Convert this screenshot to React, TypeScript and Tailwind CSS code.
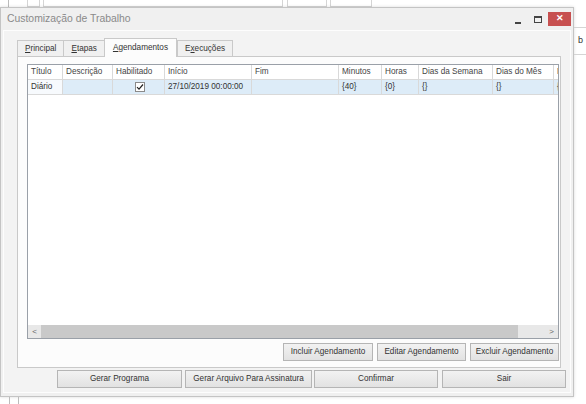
import React from "react";

// colunas da grade de agendamentos (larguras medidas no print)
const columns = [
  { title: "Título", w: 35 },
  { title: "Descrição", w: 50 },
  { title: "Habilitado", w: 52 },
  { title: "Início", w: 87 },
  { title: "Fim", w: 87 },
  { title: "Minutos", w: 43 },
  { title: "Horas", w: 37 },
  { title: "Dias da Semana", w: 74 },
  { title: "Dias do Mês", w: 61 },
  { title: "M", w: 20 },
];

const row = ["Diário", "", "check", "27/10/2019 00:00:00", "", "{40}", "{0}", "{}", "{}", "{"];

function Tab({ label, mn, active }: { label: string; mn: number; active?: boolean }) {
  const txt = (
    <>
      {label.slice(0, mn)}
      <span className="underline">{label[mn]}</span>
      {label.slice(mn + 1)}
    </>
  );
  if (active) {
    return (
      <div className="h-[19px] px-[8px] pt-[3px] bg-[#fcfcfc] border border-[#c9c9c9] border-b-0 -mb-px relative z-10">
        {txt}
      </div>
    );
  }
  return (
    <div className="h-[16px] px-[7px] pt-[2px] bg-[#f0f0f0] border border-[#c9c9c9] border-b-0 -mr-px">
      {txt}
    </div>
  );
}

function Btn({ label, w }: { label: string; w: number }) {
  return (
    <div
      className="h-[18px] flex items-center justify-center border border-[#b5b5b5] bg-gradient-to-b from-[#f2f2f2] to-[#e2e2e2] text-[#333]"
      style={{ width: w }}
    >
      {label}
    </div>
  );
}

export default function App() {
  return (
    <div
      className="w-[586px] h-[404px] overflow-hidden bg-white text-[8.2px] text-[#333]"
      style={{ fontFamily: '"Liberation Sans", Arial, sans-serif' }}
    >
      {/* pedaço da tela de trás */}
      <div className="h-[7px] flex">
        <div className="w-[9px] border-r border-[#bcbcbc]" />
        <div className="ml-[18px] w-[13px] border border-t-0 border-[#d5d5d5]" />
        <div className="ml-[3px] w-[240px] border border-t-0 border-[#d5d5d5]" />
        <div className="ml-[4px] w-[40px] border border-t-0 border-[#d5d5d5]" />
        <div className="ml-[3px] w-[42px] border border-t-0 border-[#d5d5d5]" />
      </div>

      <div className="flex">
        {/* janela */}
        <div className="w-[574px] h-[390px] bg-[#f0f0f0] border border-[#c4c4c4] flex flex-col shadow-[0_0_3px_rgba(0,0,0,0.15)]">
          <div className="h-[22px] flex items-center pl-[6px] pr-[2px]">
            <div className="text-[10.4px] text-[#8a8a8a] flex-1">Customização de Trabalho</div>
            <div className="w-[20px] flex justify-center items-end h-[10px]">
              <div className="w-[6px] h-[2px] bg-[#444]" />
            </div>
            <div className="w-[20px] flex justify-center">
              <div className="w-[8px] h-[7px] border border-[#444] border-t-2" />
            </div>
            <div className="w-[23px] h-[14px] bg-[#c75050] flex items-center justify-center text-white text-[9px] font-bold">
              ✕
            </div>
          </div>

          <div className="flex-1 mx-[2px] mb-[3px] bg-[#f3f3f3] border border-[#fdfdfd] flex flex-col">
            {/* abas */}
            <div className="h-[25px] flex items-end pl-[13px]">
              <Tab label="Principal" mn={0} />
              <Tab label="Etapas" mn={0} />
              <Tab label="Agendamentos" mn={0} active />
              <Tab label="Execuções" mn={1} />
            </div>

            <div className="ml-[13px] w-[544px] h-[312px] border border-[#c9c9c9] bg-[#fcfcfc] flex flex-col pt-[7px] pl-[9px]">
              {/* grade */}
              <div className="w-[532px] h-[275px] border border-[#9aa0a8] bg-white flex flex-col">
                <div className="flex-1 overflow-hidden">
                  <div className="flex h-[15px] border-b border-[#d9d9d9] text-[#444]">
                    {columns.map((c) => (
                      <div
                        key={c.title}
                        className="shrink-0 pl-[3px] flex items-center border-r border-[#d9d9d9] whitespace-nowrap overflow-hidden"
                        style={{ width: c.w }}
                      >
                        {c.title}
                      </div>
                    ))}
                  </div>
                  <div className="flex h-[15px] border-b border-[#d9d9d9]">
                    {columns.map((c, i) => (
                      <div
                        key={c.title}
                        className={
                          "shrink-0 pl-[3px] flex items-center border-r border-[#d9d9d9] whitespace-nowrap overflow-hidden " +
                          (i === 0 ? "bg-[#f7fafd]" : "bg-[#ddecf8]") +
                          (row[i] === "check" ? " justify-center pl-0" : "")
                        }
                        style={{ width: c.w }}
                      >
                        {row[i] === "check" ? (
                          <div className="w-[10px] h-[10px] border border-[#8a8a8a] bg-white flex items-center justify-center">
                            <svg width="8" height="8" viewBox="0 0 8 8">
                              <path d="M1 4.2 L3 6.2 L7 1.5" fill="none" stroke="#222" strokeWidth="1.2" />
                            </svg>
                          </div>
                        ) : (
                          row[i]
                        )}
                      </div>
                    ))}
                  </div>
                </div>
                {/* barra de rolagem horizontal */}
                <div className="h-[13px] bg-[#e8e8e8] flex items-center">
                  <div className="w-[13px] text-center text-[#666] text-[8px]">&lt;</div>
                  <div className="w-[477px] h-[13px] bg-[#c9c9c9]" />
                  <div className="flex-1" />
                  <div className="w-[13px] text-center text-[#666] text-[8px]">&gt;</div>
                </div>
              </div>

              <div className="w-[532px] flex justify-end gap-[4px] mt-[4px]">
                <Btn label="Incluir Agendamento" w={90} />
                <Btn label="Editar Agendamento" w={89} />
                <Btn label="Excluir Agendamento" w={89} />
              </div>
            </div>

            <div className="flex pl-[53px] mt-[2px]">
              <Btn label="Gerar Programa" w={125} />
              <div className="w-[3px]" />
              <Btn label="Gerar Arquivo Para Assinatura" w={127} />
              <div className="w-[2px]" />
              <Btn label="Confirmar" w={124} />
              <div className="w-[4px]" />
              <Btn label="Sair" w={124} />
            </div>
          </div>
        </div>

        {/* lado direito de trás */}
        <div className="flex-1 flex flex-col pt-[20px]">
          <div className="h-[28px] border-y border-[#d5d5d5] pl-[4px] flex items-center text-[9px]">b</div>
        </div>
      </div>

      <div className="h-[7px] flex">
        <div className="w-[10px] border-r border-[#bcbcbc]" />
        <div className="w-[9px] border-r border-[#bcbcbc]" />
      </div>
    </div>
  );
}
